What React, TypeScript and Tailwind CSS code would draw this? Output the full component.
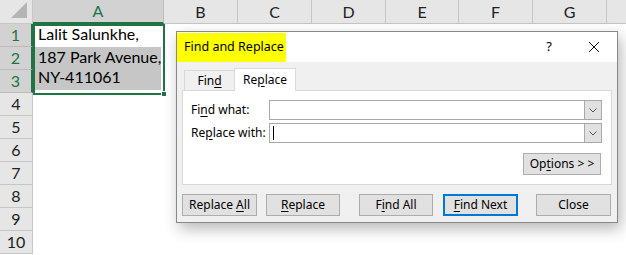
import React from 'react';

const cols = [
  { name: 'A', w: 'w-[131px]', sel: true },
  { name: 'B', w: 'w-[74px]' },
  { name: 'C', w: 'w-[74px]' },
  { name: 'D', w: 'w-[74px]' },
  { name: 'E', w: 'w-[73px]' },
  { name: 'F', w: 'w-[74px]' },
  { name: 'G', w: 'w-[74px]' },
  { name: '', w: 'w-[74px]' },
];

const cellText: Record<number, string> = {
  1: 'Lalit Salunkhe,',
  2: '187 Park Avenue,',
  3: 'NY-411061',
};

function U({ children }: { children: React.ReactNode }) {
  return <span className="underline underline-offset-2">{children}</span>;
}

function Btn({ children, w, focus }: { children: React.ReactNode; w: string; focus?: boolean }) {
  return (
    <div
      className={`${w} h-[22px] flex items-center justify-center bg-[#e1e1e1] text-[12px] text-black ${
        focus ? 'border-2 border-[#0078d7]' : 'border border-[#adadad]'
      }`}
    >
      <span className="whitespace-pre">{children}</span>
    </div>
  );
}

function ComboBox() {
  return (
    <div className="flex h-[20px] w-[333px] border border-[#a8a8a8] bg-white">
      <div className="flex-1" />
      <div className="w-[17px] h-full bg-[#e1e1e1] border-l border-[#a8a8a8] flex items-center justify-center">
        <svg width="8" height="5" viewBox="0 0 8 5">
          <path d="M0.5 0.5 L4 4 L7.5 0.5" fill="none" stroke="#555" strokeWidth="1" />
        </svg>
      </div>
    </div>
  );
}

function Dialog() {
  return (
    <div
      className="absolute left-[176px] top-[31px] w-[442px] h-[192px] bg-[#f0f0f0] border border-[#888] shadow-[3px_6px_14px_rgba(0,0,0,0.28)] flex flex-col"
      style={{ fontFamily: '"Noto Sans", "Open Sans", sans-serif' }}
    >
      {/* title bar */}
      <div className="h-[30px] bg-white flex items-center">
        <div className="h-[29px] w-[109px] bg-[#ffff00] flex items-center pl-[7px] text-[12.5px] text-black">
          Find and Replace
        </div>
        <div className="flex-1" />
        <div className="text-[13px] text-black mr-[36px]">?</div>
        <svg width="12" height="12" viewBox="0 0 12 12" className="mr-[17px]">
          <path d="M1 1 L11 11 M11 1 L1 11" stroke="#111" strokeWidth="1" />
        </svg>
      </div>

      {/* tabs */}
      <div className="flex items-end h-[28px] pl-[7px] relative z-10">
        <div className="h-[20px] w-[51px] border border-b-0 border-[#d9d9d9] flex items-center justify-center text-[12px] text-black">
          <span>
            Fin<U>d</U>
          </span>
        </div>
        <div className="h-[23px] w-[62px] -ml-px bg-white border border-b-0 border-[#d9d9d9] flex items-center justify-center text-[12px] text-black mb-[-1px]">
          <span>
            Re<U>p</U>lace
          </span>
        </div>
      </div>

      {/* panel */}
      <div className="mx-[5px] h-[95px] bg-white border border-[#d9d9d9] relative">
        <div className="flex items-center mt-[9px] h-[20px]">
          <div className="w-[86px] pl-[8px] text-[12px] text-black">
            Fi<U>n</U>d what:
          </div>
          <ComboBox />
        </div>
        <div className="flex items-center mt-[3px] h-[20px]">
          <div className="w-[86px] pl-[8px] text-[12px] text-black">
            Re<U>p</U>lace with:
          </div>
          <div className="relative">
            <ComboBox />
            <div className="absolute left-[4px] top-[3px] w-px h-[14px] bg-black" />
          </div>
        </div>
        <div className="flex justify-end mt-[10px] pr-[10px]">
          <Btn w="w-[78px]">
            Op<U>t</U>ions &gt; &gt;
          </Btn>
        </div>
      </div>

      {/* buttons */}
      <div className="flex mt-[9px] pl-[5px]">
        <Btn w="w-[75px]">
          Replace <U>A</U>ll
        </Btn>
        <div className="ml-[9px]">
          <Btn w="w-[74px]">
            <U>R</U>eplace
          </Btn>
        </div>
        <div className="ml-[19px]">
          <Btn w="w-[74px]">
            F<U>i</U>nd All
          </Btn>
        </div>
        <div className="ml-[10px]">
          <Btn w="w-[75px]" focus>
            <U>F</U>ind Next
          </Btn>
        </div>
        <div className="ml-[18px]">
          <Btn w="w-[75px]">Close</Btn>
        </div>
      </div>
    </div>
  );
}

export default function App() {
  const rows = Array.from({ length: 10 }, (_, i) => i + 1);
  return (
    <div
      className="relative w-[626px] h-[255px] overflow-hidden bg-white"
      style={{ fontFamily: 'Lato, "Noto Sans", sans-serif' }}
    >
      {/* column headers */}
      <div className="flex h-[24px]">
        <div className="w-[33px] shrink-0 h-full bg-[#e6e6e6] border-r border-b border-[#c6c6c6] relative overflow-hidden">
          <svg width="20" height="20" viewBox="0 0 20 20" className="absolute right-[3px] bottom-[3px]">
            <path d="M18 2 L18 18 L2 18 Z" fill="#b5b5b5" />
          </svg>
        </div>
        {cols.map((c, i) => (
          <div
            key={i}
            className={`${c.w} shrink-0 h-full flex items-center justify-center text-[16px] border-r ${
              c.sel
                ? 'bg-[#d2d2d2] text-[#217346] border-b-2 border-b-[#217346] border-r-[#bcbcbc]'
                : 'bg-[#e6e6e6] text-[#222] border-b border-[#c6c6c6]'
            }`}
          >
            {c.name}
          </div>
        ))}
      </div>

      {/* rows */}
      {rows.map((r) => {
        const sel = r <= 3;
        return (
          <div key={r} className="flex h-[23px]">
            <div
              className={`w-[33px] h-full flex items-center justify-center text-[16px] border-b ${
                sel
                  ? 'bg-[#d2d2d2] text-[#217346] border-r-2 border-r-[#217346] border-b-[#bcbcbc]'
                  : 'bg-[#e6e6e6] text-[#222] border-r border-[#c6c6c6]'
              }`}
            >
              {r}
            </div>
            <div
              className={`w-[131px] h-full flex items-end pb-[1px] pl-[5px] text-[16px] text-black whitespace-nowrap border-r-[3px] border-r-white ${
                r === 2 || r === 3 ? 'bg-[#c6c6c6]' : 'bg-white'
              } ${r === 3 ? 'border-b-[3px] border-b-white' : ''}`}
            >
              {cellText[r] ?? ''}
            </div>
            <div className="flex-1" />
          </div>
        );
      })}

      {/* selection outline */}
      <div className="absolute left-[33px] top-[24px] w-[132px] h-[71px] border-2 border-[#217346] pointer-events-none" />
      <div className="absolute left-[161px] top-[91px] w-[6px] h-[6px] bg-[#217346] border border-white" />

      <Dialog />
    </div>
  );
}
